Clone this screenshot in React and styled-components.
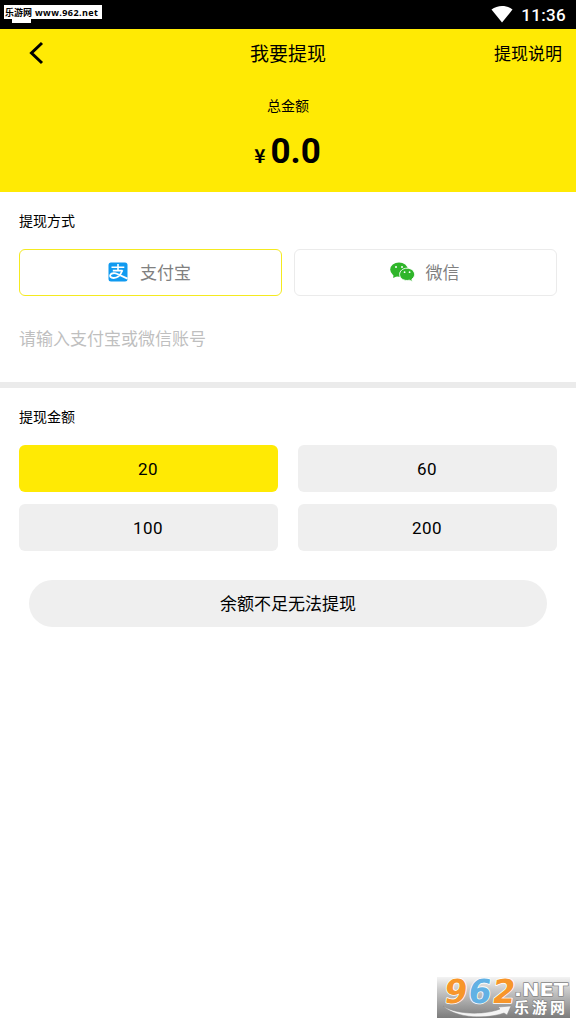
import React, { useState } from 'react';
import styled, { createGlobalStyle } from 'styled-components';

const GlobalStyle = createGlobalStyle`
  * {
    box-sizing: border-box;
  }

  body {
    margin: 0;
    background: #fff;
    color: #000;
    font-family: Roboto, 'Noto Sans CJK SC', sans-serif;
  }

  button, input {
    font-family: inherit;
    color: inherit;
  }
`;

const Screen = styled.div`
  display: flex;
  flex-direction: column;
  width: 576px;
  height: 1024px;
  overflow: hidden;
`;

const StatusBar = styled.div`
  display: flex;
  flex: none;
  align-items: center;
  justify-content: space-between;
  height: 29px;
  padding: 0 10px 0 4px;
  background: #000;
`;
const SiteTag = styled.div`
  align-self: flex-start;
  display: flex;
  align-items: center;
  gap: 3px;
  width: 98px;
  height: 14px;
  margin-top: 5px;
  padding: 1px 0 0 1px;
  background: #fff;
  color: #000;
  font: bold 9px/14px 'Noto Sans CJK SC', sans-serif;
  white-space: nowrap;
  position: relative;

  &::after {
    content: '';
    position: absolute;
    left: 8px;
    top: 14px;
    width: 19px;
    height: 4px;
    background: #fff;
  }
`;
const SiteUrl = styled.span`
  font: bold 9px/14px 'Open Sans', sans-serif;
  letter-spacing: 0.4px;
`;
const StatusRight = styled.div`
  display: flex;
  align-items: center;
  gap: 8px;
  color: #fff;
`;
const Clock = styled.span`
  font: 500 17px/20px Roboto, sans-serif;
  letter-spacing: 0.3px;
  padding-top: 1px;
`;

const Header = styled.header`
  flex: none;
  height: 163px;
  background: #ffea04;
`;
const NavBar = styled.div`
  display: grid;
  grid-template-columns: 1fr auto 1fr;
  align-items: center;
  height: 48px;
  padding: 0 14px 0 28px;
`;
const BackButton = styled.button`
  display: flex;
  justify-self: start;
  margin-right: 14px;
  padding: 0;
  border: 0;
  background: none;
`;
const Title = styled.h1`
  margin: 0;
  padding: 3px 14px 0 0;
  font-size: 19px;
  line-height: 28px;
  font-weight: 400;
`;
const HelpLink = styled.span`
  justify-self: end;
  padding-top: 2px;
  font-size: 17px;
  line-height: 24px;
`;
const Total = styled.div`
  display: flex;
  flex-direction: column;
  align-items: center;
  padding-top: 19px;
`;
const TotalLabel = styled.span`
  font-size: 14px;
  line-height: 20px;
`;
const TotalValue = styled.div`
  display: flex;
  align-items: baseline;
  gap: 5px;
  margin-top: 16px;
  padding-right: 1px;
  font-size: 35px;
  line-height: 40px;
  font-weight: 700;
`;
const Currency = styled.span`
  font-family: 'Noto Sans CJK SC', sans-serif;
  font-size: 19px;
  line-height: 20px;
`;

const Section = styled.section`
  padding: 0 19px;
`;
const Label = styled.h2`
  margin: 0;
  padding: 19px 0 18px;
  font-size: 14px;
  line-height: 20px;
  font-weight: 400;
`;
const Methods = styled.div`
  display: grid;
  grid-template-columns: 1fr 1fr;
  gap: 12px;
`;
const Method = styled.button`
  display: flex;
  align-items: center;
  justify-content: center;
  gap: 11px;
  height: 47px;
  padding: 0 2px 2px 0;
  border: 1px solid ${props => props.$active ? '#f4ea20' : '#ebebeb'};
  border-radius: 6px;
  background: #fff;
  color: #808080;
  font-size: 17px;
`;
const AccountInput = styled.input`
  display: block;
  width: 100%;
  height: 86px;
  padding: 0;
  border: 0;
  outline: 0;
  background: none;
  font-size: 17px;

  &::placeholder {
    color: #bfbfbf;
    opacity: 1;
  }
`;
const Divider = styled.div`
  flex: none;
  height: 6px;
  background: #ebebeb;
`;
const Amounts = styled.div`
  display: grid;
  grid-template-columns: 1fr 1fr;
  gap: 12px 20px;
`;
const Amount = styled.button`
  height: 47px;
  padding: 1px 1px 0 0;
  border: 0;
  border-radius: 6px;
  background: ${props => props.$active ? '#ffea04' : '#efefef'};
  font-size: 17px;
  letter-spacing: 0.5px;
`;
const Submit = styled.button`
  display: block;
  width: 518px;
  height: 47px;
  margin: 29px auto 0;
  padding: 0 0 2px;
  border: 0;
  border-radius: 24px;
  background: #efefef;
  font-size: 17px;
`;

const Footer = styled.footer`
  display: flex;
  justify-content: flex-end;
  margin-top: auto;
  padding: 0 6px 6px 0;

  svg {
    overflow: visible;
  }
`;

const AlipayIcon = () => (
  <svg width="21" height="20" viewBox="0 0 21 20">
    <rect x="0.5" y="0.5" width="19" height="19" rx="2.5" fill="#109af0" />
    <g fill="none" stroke="#fff" strokeWidth="1.6">
      <path d="M3.5 5.2 H16.3 M10 2 V8.5 M4.8 8.6 H14.5" />
      <path d="M14.4 8.2 C13 12 9.8 16 5.6 16 C2.4 16 1.6 14.2 2.4 12.8 C3.5 10.8 7 10.9 9.4 12 L19.5 16.6" strokeWidth="1.8" />
    </g>
  </svg>
);

const WechatIcon = () => (
  <svg width="25" height="20" viewBox="0 0 25 20">
    <g fill="#2fb52a">
      <ellipse cx="9" cy="7.6" rx="8.8" ry="7.2" />
      <path d="M3.5 12 L3.2 16 L8 13.8z" />
    </g>
    <g fill="#2fb52a" stroke="#fff" strokeWidth="0.9">
      <path d="M17 6.2 C21.3 6.2 24.6 8.9 24.6 12.4 C24.6 14.4 23.5 16 21.9 17.1 L22.2 19.6 L19.4 18.2 C13.8 19.4 9.6 16.4 9.6 12.4 C9.6 8.9 12.9 6.2 17 6.2z" />
    </g>
    <g fill="#fff">
      <circle cx="6" cy="5" r="1" />
      <circle cx="12" cy="5" r="1" />
      <circle cx="14.6" cy="10.2" r="0.9" />
      <circle cx="19.6" cy="10.2" r="0.9" />
    </g>
  </svg>
);

const SiteLogo = () => (
  <svg width="133" height="41" viewBox="0 0 133 41">
    <defs>
      <linearGradient id="plate" x1="0" y1="0" x2="0" y2="1">
        <stop offset="0" stopColor="#f4f4f4" />
        <stop offset="0.3" stopColor="#cbcbcb" />
        <stop offset="1" stopColor="#7c7c7c" />
      </linearGradient>
    </defs>
    <rect width="133" height="41" fill="url(#plate)" />
    <path d="M6 29 C20 38 48 38 63 32 L61 30 L74 29 L70 38 L67 36 C50 42 20 42 6 29z" fill="#f4f4f4" stroke="#888" strokeWidth="0.5" />
    <g transform="translate(6 26) skewX(-8)" fontFamily="DejaVu Sans" fontSize="33" fontWeight="700" stroke="#fff" strokeWidth="1.6" paintOrder="stroke" strokeLinejoin="round">
      <text>
        <tspan x="0" fill="#f7962a">9</tspan><tspan x="24" fill="#62b1e4">6</tspan><tspan x="48" fill="#f7962a">2</tspan>
      </text>
    </g>
    <g fill="#fff" stroke="#858585" strokeWidth="1.4" paintOrder="stroke" strokeLinejoin="round">
      <text x="77" y="19" fontFamily="DejaVu Sans" fontSize="18" fontWeight="700" textLength="54" lengthAdjust="spacingAndGlyphs">.NET</text>
      <text x="77" y="36" fontFamily="Noto Sans CJK SC" fontSize="15" fontWeight="700" textLength="51">乐游网</text>
    </g>
  </svg>
);

const amounts = [20, 60, 100, 200];

const App = () => {
  const [method, setMethod] = useState('alipay');
  const [amount, setAmount] = useState(20);

  return (
    <Screen>
      <GlobalStyle />
      <StatusBar>
        <SiteTag>乐游网<SiteUrl>www.962.net</SiteUrl></SiteTag>
        <StatusRight>
          <svg width="22" height="18" viewBox="0 0 22 18">
            <path d="M0.5 3.6 C6.5 -1.2 15.5 -1.2 21.5 3.6 L11 16.5z" fill="#fff" />
          </svg>
          <Clock>11:36</Clock>
        </StatusRight>
      </StatusBar>
      <Header>
        <NavBar>
          <BackButton aria-label="返回">
            <svg width="16" height="24" viewBox="0 0 16 24" fill="none" stroke="#000" strokeWidth="3">
              <path d="M14 2 L3.5 12 L14 22" />
            </svg>
          </BackButton>
          <Title>我要提现</Title>
          <HelpLink>提现说明</HelpLink>
        </NavBar>
        <Total>
          <TotalLabel>总金额</TotalLabel>
          <TotalValue><Currency>¥</Currency>0.0</TotalValue>
        </Total>
      </Header>
      <Section>
        <Label>提现方式</Label>
        <Methods>
          <Method $active={method === 'alipay'} onClick={() => setMethod('alipay')}>
            <AlipayIcon />支付宝
          </Method>
          <Method $active={method === 'wechat'} onClick={() => setMethod('wechat')}>
            <WechatIcon />微信
          </Method>
        </Methods>
        <AccountInput placeholder="请输入支付宝或微信账号" />
      </Section>
      <Divider />
      <Section>
        <Label>提现金额</Label>
        <Amounts>
          {amounts.map(value => (
            <Amount key={value} $active={value === amount} onClick={() => setAmount(value)}>
              {value}
            </Amount>
          ))}
        </Amounts>
        <Submit>余额不足无法提现</Submit>
      </Section>
      <Footer>
        <SiteLogo />
      </Footer>
    </Screen>
  );
};

export default App;
